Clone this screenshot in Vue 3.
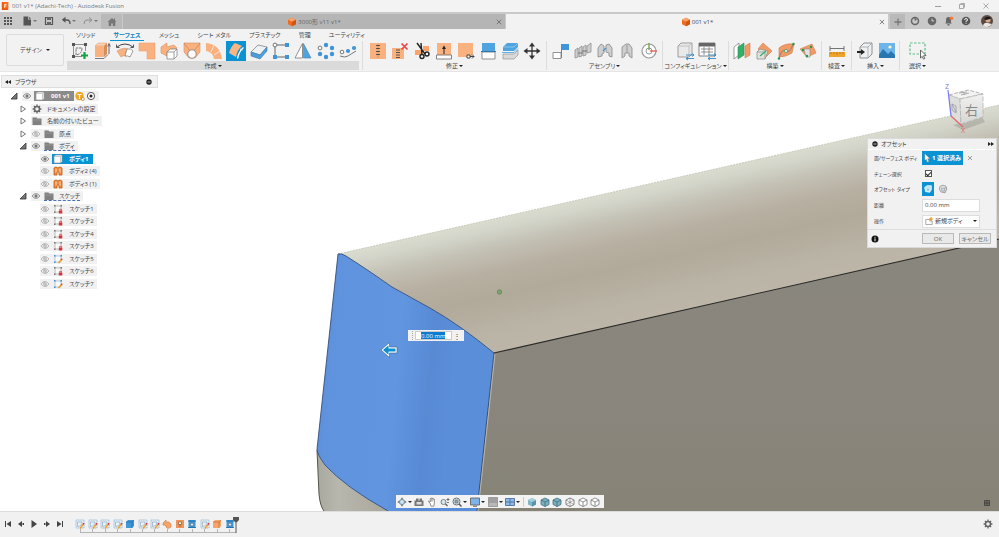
<template>
  <div class="app">
    <svg class="sprite" aria-hidden="true">
      <defs>
        <!-- create -->
        <symbol id="r-sketch" viewBox="0 0 20 20">
          <path d="M4 3.500h10M3.500 4v11M4 15.500h8M15.500 4v6" stroke="#777" stroke-width=".8" fill="none" />
          <path d="M6 14V7h6q0 6-6 7z" stroke="#555" stroke-width=".8" fill="none" stroke-dasharray="2.500 .8" />
          <path d="M2 2h3v3H2zM14 2h3v3h-3zM2 14h3v3H2z" fill="#555" />
          <path d="M14.500 11v7M11 14.500h7" stroke="#16a245" stroke-width="2.200" />
        </symbol>
        <symbol id="r-extrude" viewBox="0 0 20 20">
          <path d="M3 5l3-3h9l-3 3z" fill="#fcd1b0" stroke="#d59a6e" stroke-width=".5" />
          <path d="M3 5h9v11H3z" fill="#f9b17f" />
          <path d="M12 5l3-3v11l-3 3z" fill="#d88d5a" />
          <path d="M3 17.500h9l4-4" stroke="#777" stroke-width="1" fill="none" />
          <path d="M17 13V4M15.700 5.500L17 2.500l1.300 3" stroke="#555" stroke-width=".9" fill="none" />
        </symbol>
        <symbol id="r-revolve" viewBox="0 0 20 20">
          <path d="M2 10q8-5 12-1l-3 6q-3-1-5 1z" fill="#f9b17f" stroke="#d3925f" stroke-width=".6" />
          <path d="M12 8q4-1 6 2l-3 6q-2-1.500-5-1z" fill="#fff" stroke="#777" stroke-width=".7" />
          <path d="M2 6q8-6 16 0" stroke="#444" fill="none" />
          <path d="M1.500 3.500v3h3M18.500 3.500v3h-3" stroke="#444" fill="none" stroke-width=".9" />
        </symbol>
        <symbol id="r-sweep" viewBox="0 0 20 20">
          <path d="M2 2h16v16h-8v-8H2z" fill="#f9b17f" stroke="#e7a171" stroke-width=".6" />
        </symbol>
        <symbol id="r-loft" viewBox="0 0 20 20">
          <path d="M2 6l6-4v4l7-2 3 3-4 3-6 1v4l-6-3z" fill="#f9b17f" stroke="#d3925f" stroke-width=".6" />
          <path d="M8 11h7v7H8zM8 11l3-3h7v7l-3 3M15 11l3-3" fill="#fff" stroke="#777" stroke-width=".7" />
        </symbol>
        <symbol id="r-patch" viewBox="0 0 20 20">
          <path d="M2 2h16v9l-5 6H7l-5-6z" fill="#f9b17f" stroke="#d3925f" stroke-width=".6" />
          <path d="M2 2l6 8M18 2l-6 8" fill="none" stroke="#c98455" stroke-width=".7" />
          <circle cx="10" cy="13" r="4.200" fill="#fff" stroke="#777" stroke-width=".8" />
        </symbol>
        <symbol id="r-ruled" viewBox="0 0 20 20">
          <path d="M2 2q14 1 16 16h-8q-1-7-8-8z" fill="#f9b17f" />
          <path d="M10 4L7 11M16 10l-6 4" stroke="#fff" stroke-width=".6" />
        </symbol>
        <symbol id="r-offset" viewBox="0 0 20 20">
          <path d="M3 12Q5 5 9 2l7 3q-5 4-6 11z" fill="#f9b584" />
          <path d="M11.500 17.500Q13 10 17.500 6.500" stroke="#fff" stroke-width="1.300" fill="none" />
          <path d="M14 8l2.500 1" stroke="#fff" stroke-width=".8" />
        </symbol>
        <symbol id="r-thicken" viewBox="0 0 20 20">
          <path d="M2 11l7-7 9 2-7 8z" fill="#eef1f4" stroke="#777" stroke-width=".7" />
          <path d="M2 11l9 3 7-8v4l-7 8-9-3z" fill="#4c9dda" stroke="#3b7fb4" stroke-width=".6" />
        </symbol>
        <symbol id="r-rect" viewBox="0 0 20 20">
          <path d="M6 4h8M4 6v8M6 16h8" stroke="#666" fill="none" />
          <circle cx="4" cy="4" r="1.900" fill="#fff" stroke="#555" stroke-width=".8" />
          <path d="M14 2h4v4h-4zM2 14h4v4H2zM14 14h4v4h-4z" fill="#3f93d6" />
        </symbol>
        <symbol id="r-mirror" viewBox="0 0 20 20">
          <path d="M9.500 2.500v14.500H2z" fill="#fff" stroke="#777" stroke-width=".8" />
          <path d="M10.500 2.500v14.500H18z" fill="#4fa3df" stroke="#3a83b8" stroke-width=".6" />
        </symbol>
        <symbol id="r-pattern" viewBox="0 0 20 20">
          <g fill="#3f93d6">
            <circle cx="10" cy="4" r="2.200" /><circle cx="16" cy="7" r="2.200" /><circle cx="16" cy="13" r="2.200" />
            <circle cx="10" cy="16" r="2.200" /><circle cx="4" cy="13" r="2.200" />
          </g>
          <circle cx="4" cy="7" r="1.900" fill="#fff" stroke="#555" stroke-width=".8" />
        </symbol>
        <symbol id="r-path" viewBox="0 0 20 20">
          <path d="M2 15q5 2 8 0t8-5" stroke="#777" fill="none" />
          <circle cx="4" cy="11" r="1.800" fill="#fff" stroke="#555" stroke-width=".8" />
          <circle cx="10" cy="10" r="2.100" fill="#3f93d6" /><circle cx="16" cy="7" r="2.100" fill="#3f93d6" />
        </symbol>
        <!-- modify -->
        <symbol id="r-stitch" viewBox="0 0 20 20">
          <path d="M2 2h16v16H2z" fill="#f9b17f" />
          <path d="M10 3v14" stroke="#d18e5c" stroke-width=".8" />
          <path d="M8 4.500h4M8 7.500h4M8 10.500h4M8 13.500h4" stroke="#444" stroke-width=".9" />
        </symbol>
        <symbol id="r-unstitch" viewBox="0 0 20 20">
          <path d="M2 7h12v11H2z" fill="#f9b17f" />
          <path d="M6 9h4M6 11.500h4M6 14h4M6 16.500h4" stroke="#444" stroke-width=".9" />
          <path d="M11.500 2.500l6 6M17.500 2.500l-6 6" stroke="#f04444" stroke-width="1.700" />
        </symbol>
        <symbol id="r-trim" viewBox="0 0 20 20">
          <path d="M11 5h6v5h-6zM3 9h6v5H3z" fill="#f9a56a" />
          <path d="M5 2l8 11M9 2l1 12" stroke="#222" stroke-width="1.400" />
          <circle cx="10" cy="15.500" r="2" fill="none" stroke="#222" stroke-width="1.400" />
          <circle cx="15" cy="13" r="2" fill="none" stroke="#222" stroke-width="1.400" />
        </symbol>
        <symbol id="r-extend" viewBox="0 0 20 20">
          <path d="M3 2h14v12H3z" fill="#f9b17f" />
          <path d="M2.500 14h15v4h-15z" fill="#fff" stroke="#666" stroke-width=".8" />
          <path d="M10 13V6.500" stroke="#222" /><path d="M10 4.500l2 3.500H8z" fill="#222" />
        </symbol>
        <symbol id="r-replace" viewBox="0 0 20 20">
          <path d="M2 2h15v14H2z" fill="#f9b17f" />
          <path d="M11 14h3v3h-3zM14 15.500h4M16 13.500l2 2-2 2" stroke="#333" fill="#fff" stroke-width=".9" />
        </symbol>
        <symbol id="r-split" viewBox="0 0 20 20">
          <path d="M4 2h13v8H4z" fill="#4fa3df" />
          <path d="M4 11h13v7H4z" fill="#fff" stroke="#777" stroke-width=".8" />
          <path d="M3 10.500h15" stroke="#2f77ad" />
        </symbol>
        <symbol id="r-splitbody" viewBox="0 0 20 20">
          <path d="M3 6l4-4h11v4l-4 4H3z" fill="#4fa3df" />
          <path d="M3 6h11l4-4" stroke="#9acbf0" stroke-width=".8" fill="none" />
          <path d="M2 11.500h12l4-4" stroke="#5fb2ea" fill="none" />
          <path d="M3 13h11l4-4v5l-4 4H3z" fill="#d9d9d9" stroke="#888" stroke-width=".6" />
        </symbol>
        <symbol id="r-move" viewBox="0 0 20 20">
          <path d="M10 3v14M3 10h14" stroke="#333" stroke-width="1.300" />
          <path d="M10 1.500l3 4H7zM10 18.500l3-4H7zM1.500 10l4-3v6zM18.500 10l-4-3v6z" fill="#333" />
        </symbol>
        <!-- assemble -->
        <symbol id="r-component" viewBox="0 0 20 20">
          <path d="M2 11.500h8v6H2z" fill="#fff" stroke="#777" stroke-width=".8" />
          <path d="M11 3h7v6h-7z" fill="#3f97d9" />
          <path d="M10.500 3v14" stroke="#e4574f" />
        </symbol>
        <symbol id="r-joint" viewBox="0 0 20 20">
          <path d="M2 17V9l3-2v9zM6 16V7l3-2v10zM10 15V6l3-2v10zM14 12V5l4-3v9z" fill="#cfcfcf" stroke="#888" stroke-width=".7" />
          <path d="M5 12h5M9 10h5" stroke="#777" />
        </symbol>
        <symbol id="r-asbuilt" viewBox="0 0 20 20">
          <path d="M3 16V7l3-4 3 2v7l-2 1v2zM11 11V4l3-1 3 4v9l-3-1v-3z" fill="#cfcfcf" stroke="#888" stroke-width=".8" />
          <path d="M8 10l3-3" stroke="#3f93d6" stroke-width="1.300" />
        </symbol>
        <symbol id="r-rigid" viewBox="0 0 20 20">
          <path d="M5 17V6l4-3h3l3 4v10l-3-2v-3H8v3z" fill="#cfcfcf" stroke="#888" stroke-width=".8" />
          <path d="M10 4v8" stroke="#999" />
        </symbol>
        <symbol id="r-drive" viewBox="0 0 20 20">
          <circle cx="10" cy="10" r="7" fill="#fff" stroke="#999" stroke-width="1.200" />
          <circle cx="10" cy="10" r="3" fill="none" stroke="#999" />
          <path d="M10 9V2" stroke="#63a83f" stroke-width="1.300" />
          <path d="M11 10h7" stroke="#e4574f" stroke-width="1.300" />
        </symbol>
        <!-- configure -->
        <symbol id="r-config" viewBox="0 0 20 20">
          <path d="M3 5l3-3h11v11l-3 3H3z" fill="#e9e9e9" stroke="#888" stroke-width=".8" />
          <path d="M3 5h11v11M14 5l3-3" fill="none" stroke="#aaa" stroke-width=".6" />
          <path d="M11 14h8M17 12.500l2 1.500-2 1.500M19 17.500h-8M13 16l-2 1.500 2 1.500" stroke="#2f86c1" fill="none" stroke-width=".9" />
        </symbol>
        <symbol id="r-table" viewBox="0 0 20 20">
          <path d="M2 2h16v13H2z" fill="#fff" stroke="#666" stroke-width=".8" />
          <path d="M2 2h16v3.500H2z" fill="#666" />
          <path d="M4 8h12M4 11h12M7 6v8M12 6v8" stroke="#777" stroke-width=".8" />
          <path d="M11 14h8M17 12.500l2 1.500-2 1.500M19 17.500h-8M13 16l-2 1.500 2 1.500" stroke="#2f86c1" fill="none" stroke-width=".9" />
        </symbol>
        <!-- construct -->
        <symbol id="r-plane" viewBox="0 0 20 20">
          <path d="M2 6l5-4v12l-5 4z" fill="#fff" stroke="#777" stroke-width=".7" />
          <path d="M6 6l6-4v12l-6 4z" fill="#35b06a" stroke="#2a8f55" stroke-width=".6" />
          <path d="M13 5l5-3v12l-5 3z" fill="#f39a66" stroke="#c97a4a" stroke-width=".6" />
        </symbol>
        <symbol id="r-axis" viewBox="0 0 20 20">
          <path d="M9 2l9 8-6 6-8-8z" fill="#f39a66" stroke="#c97a4a" stroke-width=".6" />
          <path d="M3 11h8v7H3zM3 11l3-3 8 2-3 8" fill="#dfe3dd" stroke="#888" stroke-width=".7" />
          <path d="M6 15l6-5" stroke="#35b06a" stroke-width="1.300" />
        </symbol>
        <symbol id="r-tangent" viewBox="0 0 20 20">
          <path d="M3 7q6-5 15-4l-2 9q-6 4-13 4z" fill="#f39a66" stroke="#c97a4a" stroke-width=".6" />
          <path d="M3 17q3-10 7-7t7-7" stroke="#777" fill="none" stroke-width=".8" />
          <circle cx="3" cy="17.500" r="1.200" fill="#1a9b4c" /><circle cx="17.500" cy="3" r="1.200" fill="#1a9b4c" /><circle cx="10" cy="10" r="1.600" fill="#eee" stroke="#1a9b4c" stroke-width=".6" />
        </symbol>
        <symbol id="r-point" viewBox="0 0 20 20">
          <path d="M2 8l12-5 4 9-9 4z" fill="#f39a66" stroke="#c97a4a" stroke-width=".6" />
          <path d="M6 8h6v8H8z" fill="#e4e4e4" stroke="#888" stroke-width=".6" />
          <circle cx="5" cy="9" r="1.200" fill="#1a9b4c" /><circle cx="13" cy="6" r="1.200" fill="#1a9b4c" /><circle cx="9" cy="15" r="1.200" fill="#1a9b4c" />
        </symbol>
        <!-- inspect, insert, select -->
        <symbol id="r-measure" viewBox="0 0 20 20">
          <path d="M3 5v5M17 5v5M3 7.500h14" stroke="#666" stroke-width=".9" />
          <path d="M2 11h16v5H2z" fill="#f0a32a" />
          <path d="M4 11v2M7 11v2M10 11v3M13 11v2M16 11v2" stroke="#a86a10" stroke-width=".7" />
        </symbol>
        <symbol id="r-insert" viewBox="0 0 20 20">
          <path d="M5 6l4-4h8v11l-4 4H5z" fill="#eef1f4" stroke="#777" stroke-width=".8" />
          <path d="M5 6h8v11M13 6l4-4" fill="none" stroke="#999" stroke-width=".7" />
          <path d="M2 11h5" stroke="#222" stroke-width="2" />
          <path d="M6 8l4 3-4 3z" fill="#222" />
        </symbol>
        <symbol id="r-image" viewBox="0 0 20 20">
          <path d="M2 2h16v15H2z" fill="#6cb4ea" />
          <path d="M2 14l4-6 5 5 3-3 4 4v3H2z" fill="#2a76b0" />
          <circle cx="13" cy="6" r="1.600" fill="#fff6c8" />
        </symbol>
        <symbol id="r-select" viewBox="0 0 20 20">
          <path d="M2 2h15v11H2z" fill="none" stroke="#5cc088" stroke-width="1.200" stroke-dasharray="2.500 1.500" />
          <path d="M12.500 9l5.500 5.500-2.500.3 1.300 2.700-1.300.6-1.300-2.700-1.700 1.600z" fill="#fff" stroke="#444" stroke-width=".8" />
        </symbol>

        <!-- browser tree -->
        <symbol id="t-eye" viewBox="0 0 10 10">
          <path d="M1 5q4-5 8 0q-4 5-8 0z" fill="#ddd" stroke="#888" stroke-width=".8" /><circle cx="5" cy="5" r="1.500" fill="#777" />
        </symbol>
        <symbol id="t-eye-off" viewBox="0 0 10 10">
          <path d="M1 5q4-5 8 0q-4 5-8 0z" fill="none" stroke="#aaa" stroke-width=".8" /><circle cx="5" cy="5" r="1.400" fill="none" stroke="#aaa" stroke-width=".8" /><path d="M3.500 2.500l3 5" stroke="#aaa" stroke-width=".8" />
        </symbol>
        <symbol id="t-folder" viewBox="0 0 10 10">
          <path d="M.5 1.500h4l.8 1h4.200v6.500h-9z" fill="#808080" /><path d="M.5 4h9" stroke="#a3a3a3" stroke-width=".6" />
        </symbol>
        <symbol id="t-gear" viewBox="0 0 10 10">
          <circle cx="5" cy="5" r="2.500" fill="none" stroke="#666" stroke-width="1.500" />
          <path d="M5 .6v2M5 7.400v2M.6 5h2M7.400 5h2M1.900 1.900l1.400 1.400M6.700 6.700l1.400 1.400M8.100 1.900L6.700 3.300M3.300 6.700L1.900 8.100" stroke="#666" stroke-width="1.300" />
        </symbol>
        <symbol id="t-cube" viewBox="0 0 10 10">
          <path d="M1 2.500l1.500-1.500h6.500v6.500L7.500 9H1z" fill="#fff" stroke="#999" stroke-width=".7" /><path d="M1 2.500h6.500V9M7.500 2.500L9 1" fill="none" stroke="#aaa" stroke-width=".6" />
        </symbol>
        <symbol id="t-surface" viewBox="0 0 10 10">
          <path d="M1 2q2-2 4 0q2-2 4 0v7H6V6H4v3H1z" fill="#f08a3c" stroke="#c25d14" stroke-width=".8" /><path d="M3 2.500v4M7 2.500v4" stroke="#fff" stroke-width=".7" />
        </symbol>
        <symbol id="t-locked" viewBox="0 0 10 10">
          <path d="M2 2h6v6H2z" fill="#fafafa" stroke="#999" stroke-width=".6" />
          <path d="M1 1h1.500v1.500H1zM7.500 1H9v1.500H7.500zM1 7.500h1.500V9H1z" fill="#777" />
          <path d="M5.800 6.500h3.500v3H5.800z" fill="#d8323c" /><path d="M6.600 6.500V5.300h1.900v1.200" fill="none" stroke="#d8323c" stroke-width=".7" />
        </symbol>
        <symbol id="t-pencil" viewBox="0 0 10 10">
          <path d="M2 2h6v6H2z" fill="#fafafa" stroke="#8ba7bd" stroke-width=".6" />
          <path d="M1 1h1.500v1.500H1zM7.500 1H9v1.500H7.500zM1 7.500h1.500V9H1z" fill="#3b8fcd" />
          <path d="M5.500 9l3-3.500" stroke="#f0a02c" stroke-width="1.600" /><path d="M8.300 5.700l.8-.9" stroke="#d8323c" stroke-width="1.600" />
        </symbol>
        <symbol id="t-sketch" viewBox="0 0 10 10">
          <path d="M1 1h8v8H1z" fill="#eaf2f9" stroke="#7aa9cf" stroke-width=".7" stroke-dasharray="1.500 .6" />
          <path d="M2.500 7.500V3H7q0 4-4.500 4.500z" fill="none" stroke="#8fa9bd" stroke-width=".7" />
          <path d="M5 9.500l3-4" stroke="#f0a02c" stroke-width="1.600" /><path d="M8 5.500l1-1.300" stroke="#d8323c" stroke-width="1.600" />
        </symbol>
        <symbol id="t-extrude" viewBox="0 0 10 10">
          <path d="M1 3l2-2h6v6L7 9H1z" fill="#3f97d9" /><path d="M1 3h6v6M7 3l2-2" fill="none" stroke="#1f6ca8" stroke-width=".7" />
        </symbol>
        <symbol id="t-extrude-o" viewBox="0 0 10 10">
          <path d="M1 3l2-2h6v6L7 9H1z" fill="#f9a56a" /><path d="M1 3h6v6M7 3l2-2" fill="none" stroke="#b96f3c" stroke-width=".7" />
        </symbol>
        <symbol id="t-loft" viewBox="0 0 10 10">
          <path d="M1 4l3-3v2h3l2 2v3L6 9.500 4 8V6.500L1 6z" fill="#f9a56a" stroke="#cf7b43" stroke-width=".6" />
        </symbol>
        <symbol id="t-stitch" viewBox="0 0 10 10">
          <path d="M1 1h8v8H1z" fill="#f0935a" /><path d="M3.500 3h3v2.500h-3zM5 5v3" fill="#fff" stroke="#7a4a2c" stroke-width=".6" />
        </symbol>
        <symbol id="t-thick" viewBox="0 0 10 10">
          <path d="M1.500 1h7v8h-7z" fill="#3f97d9" /><path d="M1 2h8M1 8.500h8" stroke="#1f6ca8" stroke-width=".8" /><circle cx="5" cy="5.500" r="1.500" fill="#e9f4fc" stroke="#555" stroke-width=".6" />
        </symbol>

        <!-- navigation bar -->
        <symbol id="n-orbit" viewBox="0 0 10 10">
          <path d="M5 .3l1.700 2.500h-3.400zM5 9.700l1.700-2.500h-3.400zM.3 5l2.500-1.700v3.400zM9.700 5L7.200 3.300v3.400z" fill="#777" /><circle cx="5" cy="5" r="2.500" fill="#cfe3f1" stroke="#5b7f99" stroke-width=".7" />
        </symbol>
        <symbol id="n-look" viewBox="0 0 10 10">
          <path d="M.5 3.500h9V9h-9zM2 1.500h2.500v2H2zM5.500 1.500H8v2H5.500z" fill="#777" /><path d="M2.500 5h5v2.500h-5z" fill="#ddd" />
        </symbol>
        <symbol id="n-pan" viewBox="0 0 10 10">
          <path d="M3 6L1.300 4.500l.8-.7L3.300 5V1.500h1V1h1v.5h1.100v.7h1V6L6.800 9.200H4z" fill="#fff" stroke="#666" stroke-width=".7" /><path d="M4.500 2v2.500M5.700 2v2.500" stroke="#666" stroke-width=".5" />
        </symbol>
        <symbol id="n-zoom" viewBox="0 0 10 10">
          <circle cx="3.500" cy="5" r="2.500" fill="#d7e9f5" stroke="#666" stroke-width=".8" /><path d="M5.500 7l2 2" stroke="#555" stroke-width="1.300" /><path d="M6.500 2.500h3M8 1v3M7 5.500h2" stroke="#444" stroke-width=".7" />
        </symbol>
        <symbol id="n-fit" viewBox="0 0 10 10">
          <circle cx="4.500" cy="4.500" r="3.500" fill="#d7e9f5" stroke="#666" stroke-width=".9" /><path d="M3 3h3v3H3z" fill="#9aa" stroke="#666" stroke-width=".6" /><path d="M7 7l2.500 2.500" stroke="#555" stroke-width="1.400" />
        </symbol>
        <symbol id="n-display" viewBox="0 0 10 10">
          <path d="M.5 1h9v7h-9z" fill="#7fb2e8" stroke="#666" stroke-width=".9" /><path d="M3 9.200h4" stroke="#666" />
        </symbol>
        <symbol id="n-grid" viewBox="0 0 10 10">
          <path d="M.5.500h9v9h-9z" fill="#a0a0a0" stroke="#888" stroke-width=".7" /><path d="M1 6h8v3H1z" fill="#b8b8b8" />
        </symbol>
        <symbol id="n-views" viewBox="0 0 10 10">
          <path d="M.5 1.500h9v7h-9z" fill="#8ebbe8" stroke="#4f6f9c" stroke-width=".9" /><path d="M5 1.500v7M.5 5h9" stroke="#4f6f9c" stroke-width=".9" />
        </symbol>
        <symbol id="n-shaded" viewBox="0 0 10 10">
          <path d="M5 1l4 2v4.500L5 9.500l-4-2V3z" fill="#7fb5c4" /><path d="M5 5v4.500l4-2V3z" fill="#5a93a5" /><path d="M5 1l4 2-4 2-4-2z" fill="#a4d0da" />
        </symbol>
        <symbol id="n-edges" viewBox="0 0 10 10">
          <path d="M5 1l4 2v4.500L5 9.500l-4-2V3z" fill="#79afbf" stroke="#44707e" stroke-width=".8" /><path d="M1 3l4 2 4-2M5 5v4.500" fill="none" stroke="#44707e" stroke-width=".8" />
        </symbol>
        <symbol id="n-wire" viewBox="0 0 10 10">
          <path d="M5 1l4 2v4.500L5 9.500l-4-2V3z" fill="#fff" stroke="#666" stroke-width=".8" /><path d="M1 3l8 4.500M9 3L1 7.500M5 1v8.500" fill="none" stroke="#777" stroke-width=".6" />
        </symbol>
        <symbol id="n-hidden" viewBox="0 0 10 10">
          <path d="M5 1l4 2v4.500L5 9.500l-4-2V3z" fill="#fff" stroke="#777" stroke-width=".8" /><path d="M1 3l4 2 4-2M5 5v4.500" fill="none" stroke="#777" stroke-width=".8" />
        </symbol>

        <!-- header -->
        <symbol id="h-grid" viewBox="0 0 10 10">
          <path d="M1 1h2v2H1zM4 1h2v2H4zM7 1h2v2H7zM1 4h2v2H1zM4 4h2v2H4zM7 4h2v2H7zM1 7h2v2H1zM4 7h2v2H4zM7 7h2v2H7z" fill="#555" />
        </symbol>
        <symbol id="h-file" viewBox="0 0 10 10"><path d="M1.500.5h4.500v3h3v6H1.500zM6.800.5L9 2.800H6.800z" fill="#555" /></symbol>
        <symbol id="h-save" viewBox="0 0 10 10">
          <path d="M1.500 1.500h7v7h-7z" fill="none" stroke="#555" stroke-width="1.200" /><path d="M3 1h4v3H3zM3 6h4v3H3z" fill="#666" />
        </symbol>
        <symbol id="h-undo" viewBox="0 0 10 10">
          <path d="M2 4h4q3 0 3 4" fill="none" stroke="#555" stroke-width="1.300" /><path d="M4.500.8v6L.8 3.800z" fill="#555" />
        </symbol>
        <symbol id="h-redo" viewBox="0 0 10 10">
          <path d="M8 4H4Q1 4 1 8" fill="none" stroke="#888" stroke-width=".9" /><path d="M6 1.500l3 2.500-3 2.500" fill="none" stroke="#888" stroke-width=".9" />
        </symbol>
        <symbol id="h-home" viewBox="0 0 10 10"><path d="M5 1L.5 5h1.200v4h2.500V6.500h1.600V9h2.500V5h1.200L8 3.500V1.500H7v1.200z" fill="#777" /></symbol>
        <symbol id="h-cube" viewBox="0 0 10 10">
          <path d="M5 .8l4 2v4.400l-4 2-4-2V2.800z" fill="#ee6b1f" /><path d="M5 .8l4 2-4 2-4-2z" fill="#fba36c" /><path d="M5 4.800v4.400l4-2V2.800z" fill="#d4530f" />
        </symbol>
        <symbol id="h-sync" viewBox="0 0 10 10"><circle cx="5" cy="5" r="3.500" fill="none" stroke="#666" stroke-width="1.500" /><path d="M4 1.500l3 2-2 1.500" fill="#666" /></symbol>
        <symbol id="h-clock" viewBox="0 0 10 10"><circle cx="5" cy="5" r="4.300" fill="#666" /><path d="M5 2.500V5h2.200" stroke="#ddd" fill="none" stroke-width=".9" /></symbol>
        <symbol id="h-bell" viewBox="0 0 10 10"><path d="M1 7.500l1-1V4q0-3 2.500-3T7 4v2.500l1 1zM3.500 8h2v1.500h-2z" fill="#666" /><circle cx="7.500" cy="2.300" r="1.800" fill="#f5793a" /></symbol>
        <symbol id="h-help" viewBox="0 0 10 10">
          <circle cx="5" cy="5" r="4.300" fill="#555" /><path d="M3.600 4q0-1.500 1.500-1.500T6.500 4Q6.500 5 5 5.200V6M5 6.800v1" fill="none" stroke="#fff" stroke-width=".9" />
        </symbol>

        <linearGradient id="top-face" gradientUnits="userSpaceOnUse" x1="620" y1="190" x2="649" y2="318">
          <stop offset="0" stop-color="#dadcd0" />
          <stop offset=".08" stop-color="#d3d5ca" />
          <stop offset=".22" stop-color="#c3c0b4" />
          <stop offset=".4" stop-color="#b7afa1" />
          <stop offset=".58" stop-color="#b1a999" />
          <stop offset=".85" stop-color="#bab4a7" />
          <stop offset="1" stop-color="#bcb5a8" />
        </linearGradient>
        <linearGradient id="side-face" x1="0" y1="0" x2="0" y2="1">
          <stop offset="0" stop-color="#89867d" />
          <stop offset=".6" stop-color="#8a867e" />
          <stop offset="1" stop-color="#868376" />
        </linearGradient>
        <linearGradient id="blue-face" gradientUnits="userSpaceOnUse" x1="325" y1="0" x2="490" y2="16">
          <stop offset="0" stop-color="#5c8fd9" />
          <stop offset=".1" stop-color="#5788d2" />
          <stop offset=".25" stop-color="#6093dd" />
          <stop offset=".65" stop-color="#6195e0" />
          <stop offset=".85" stop-color="#588ad4" />
          <stop offset="1" stop-color="#5b8ed9" />
        </linearGradient>
        <linearGradient id="lower-face" x1="0" y1="0" x2="1" y2="0">
          <stop offset="0" stop-color="#a9a89e" />
          <stop offset=".3" stop-color="#b8b7ad" />
          <stop offset="1" stop-color="#aaa79c" />
        </linearGradient>
        <linearGradient id="cube-front" x1="0" y1="0" x2="0" y2="1">
          <stop offset="0" stop-color="#f1f1f1" />
          <stop offset="1" stop-color="#d6d6d4" />
        </linearGradient>
      </defs>
    </svg>

    <header class="titlebar">
      <svg class="titlebar__logo" viewBox="0 0 10 10">
        <path d="M1 0h8v10H1z" fill="#e8590c" /><path d="M3 0h6v8H3z" fill="#ff6b1a" /><path d="M4.500 7V3H7M4.500 5h2" stroke="#fff" fill="none" />
      </svg>
      <h1 class="titlebar__title">001 v1* (Adachi-Tech) - Autodesk Fusion</h1>
      <div class="titlebar__window">
        <button type="button" aria-label="最小化"><svg viewBox="0 0 6 6"><path d="M0 3.500h6" stroke="#888" stroke-width=".8" /></svg></button>
        <button type="button" aria-label="元に戻す"><svg viewBox="0 0 6 6"><path d="M.5 1.500h4v4h-4zM1.500.5h4v4" fill="none" stroke="#888" stroke-width=".7" /></svg></button>
        <button type="button" aria-label="閉じる"><svg viewBox="0 0 6 6"><path d="M.5.5l5 5M5.500.5l-5 5" stroke="#888" stroke-width=".7" /></svg></button>
      </div>
    </header>

    <nav class="docbar">
      <div class="docbar__tools">
        <button v-for="tool in quickTools" :key="tool.icon" type="button" :aria-label="tool.label">
          <svg class="icon10"><use :href="'#' + tool.icon" /></svg>
          <span v-if="tool.menu" class="caret caret--soft"></span>
        </button>
      </div>
      <button type="button" class="docbar__home" aria-label="ホーム"><svg class="icon10"><use href="#h-home" /></svg></button>
      <div v-for="doc in documents" :key="doc.name" class="doctab" :class="{ 'doctab--active': doc.active }">
        <svg class="icon10"><use href="#h-cube" /></svg>
        <span>{{ doc.name }}</span>
        <button type="button" class="doctab__close" aria-label="タブを閉じる">
          <svg viewBox="0 0 6 6"><path d="M.8.8l4.400 4.400M5.200.8L.8 5.200" stroke="#666" stroke-width=".8" /></svg>
        </button>
      </div>
      <button type="button" class="docbar__add" aria-label="新規"><svg class="icon10" viewBox="0 0 10 10"><path d="M5 1.500v7M1.500 5h7" stroke="#777" stroke-width="1.300" /></svg></button>
      <div class="docbar__status">
        <button v-for="item in statusTools" :key="item.icon" type="button" :aria-label="item.label">
          <svg class="icon10"><use :href="'#' + item.icon" /></svg>
        </button>
        <svg class="docbar__avatar" viewBox="0 0 12 12">
          <circle cx="6" cy="6" r="6" fill="#5b4a42" /><circle cx="7" cy="5" r="2.500" fill="#d8a98c" /><path d="M2 11q1-4 5-3t4 1q-2 3-5 3T2 11z" fill="#e9e6e4" /><path d="M3 4q3-4 7-1l-1 1-4 1z" fill="#1e1a19" />
        </svg>
      </div>
    </nav>

    <section class="ribbon">
      <button type="button" class="ribbon__workspace">デザイン <span class="caret"></span></button>
      <div class="ribbon__main">
        <div class="ribbon__tabs" role="tablist">
          <button
            v-for="tab in tabs"
            :key="tab"
            type="button"
            role="tab"
            class="ribbon__tab"
            :class="{ 'ribbon__tab--active': tab === activeTab }"
            :aria-selected="tab === activeTab"
            @click="activeTab = tab"
          >{{ tab }}</button>
        </div>
        <div class="ribbon__groups">
          <div
            v-for="group in groups"
            :key="group.label"
            class="group"
            :class="{ 'group--filled': group.filled }"
            :style="{ width: group.width + 'px' }"
          >
            <div class="group__icons">
              <button
                v-for="icon in group.icons"
                :key="icon"
                type="button"
                class="group__icon"
                :class="{ 'group__icon--active': icon === 'offset' }"
                :aria-label="icon"
              ><svg><use :href="'#r-' + icon" /></svg></button>
            </div>
            <button type="button" class="group__label">{{ group.label }}<span class="caret"></span></button>
          </div>
        </div>
      </div>
    </section>

    <main class="viewport">
      <svg class="viewport__scene" viewBox="0 72 999 439" preserveAspectRatio="xMidYMid slice">
        <path d="M338 254L999 105V240L494 353Q460 325 430 308L392 287Q365 268 346 256Q341 253 338 254z" fill="url(#top-face)" />
        <path d="M338 254L999 105" stroke="#b9bbab" stroke-width=".7" stroke-dasharray="2 1" />
        <path d="M494 353L999 239V511H476z" fill="url(#side-face)" />
        <path d="M494 353L999 239" stroke="#2b2a27" stroke-width="1.100" />
        <path d="M317 449Q317 454 325 465Q345 487 388 511H324Q320 506 319 495z" fill="url(#lower-face)" />
        <path d="M317 450L319 494Q320 506 324 511" fill="none" stroke="#55544e" stroke-width="1" />
        <path d="M338 254Q341 253 346 256Q365 268 392 287L430 308Q460 325 494 353L477 511H388Q345 487 325 465Q317 454 317 449z" fill="url(#blue-face)" />
        <path d="M477 511L494 353Q460 325 430 308L392 287Q365 268 346 256Q341 253 338 254L317 449Q317 454 325 465Q345 487 388 511" fill="none" stroke="#24406f" stroke-width=".8" />
        <path d="M478 511L495 354" stroke="#c9c3b4" stroke-width=".8" />
        <circle cx="499.500" cy="292" r="2.200" fill="#7ba56c" stroke="#5d7f55" stroke-width=".7" />
        <path d="M381 350l8.500-7.500v4.500h7.500v6h-7.500v4.500z" fill="#fff" stroke="#33648c" stroke-width=".6" />
        <path d="M383 350l5.500-4.800v3.300h7v3h-7v3.300z" fill="#0d8fd0" />
      </svg>

      <aside class="browser">
        <div class="browser__head">
          <svg class="browser__fold" viewBox="0 0 6 6"><path d="M3 1v4L0 3zM6 1v4L3 3z" fill="#222" /></svg>
          <span>ブラウザ</span>
          <svg class="dot" viewBox="0 0 6 6"><circle cx="3" cy="3" r="2.700" fill="#222" /><path d="M1.500 3h3" stroke="#ddd" stroke-width=".8" /></svg>
        </div>
        <ul class="tree">
          <li v-for="node in nodes" :key="node.name" class="node" :class="'node--level' + node.level">
            <span v-if="node.open !== undefined" class="node__arrow">
              <svg viewBox="0 0 8 8">
                <path v-if="node.open" d="M7 1v6H1z" fill="#777" stroke="#333" stroke-width=".8" />
                <path v-else d="M2 1l4.500 3L2 7z" fill="#fff" stroke="#555" stroke-width=".8" />
              </svg>
            </span>
            <span class="node__body" :class="{ 'node__body--selected': node.selected, 'node__body--root': node.level === 0 }">
              <svg v-if="node.eye" class="node__eye"><use :href="node.eye === 'on' ? '#t-eye' : '#t-eye-off'" /></svg>
              <span class="node__chip" :class="{ 'node__chip--dashed': node.dashed }">
                <svg class="node__icon"><use :href="'#t-' + node.icon" /></svg>
                <span>{{ node.name }}</span>
              </span>
              <template v-if="node.level === 0">
                <svg class="node__badge" viewBox="0 0 10 10"><circle cx="4.500" cy="5" r="4.200" fill="#f2a51f" /><path d="M2.500 3.500h4M4.500 3.500V8" stroke="#fff" stroke-width="1.200" /><circle cx="7.800" cy="8" r="1.500" fill="#fff" stroke="#a06a10" stroke-width=".6" /></svg>
                <svg class="node__badge" viewBox="0 0 10 10"><circle cx="5" cy="5" r="3.600" fill="#fff" stroke="#333" stroke-width=".8" /><circle cx="5" cy="5" r="1.500" fill="#222" /></svg>
              </template>
            </span>
          </li>
        </ul>
      </aside>

      <svg class="viewcube" viewBox="0 0 54 56">
        <path d="M16 46L26 51L48 43L45 38z" fill="#77756c" opacity=".3" />
        <path d="M12 16L31 11L46 15L46 38L24 45L14 37z" fill="#ecedee" />
        <path d="M12 16L31 11L46 15L23 20z" fill="#f3f3f3" stroke="#999" stroke-width=".7" stroke-dasharray="4 1.500" />
        <path d="M12 16L23 20L24 45L14 37z" fill="#dededd" stroke="#b5b5b5" stroke-width=".6" />
        <path d="M23 20L46 15V38L24 45z" fill="url(#cube-front)" stroke="#aaa" stroke-width=".7" stroke-dasharray="5 1.500" />
        <path d="M15 25l4 2v7l-4-3zM15 25l4 8M22 14l8-1M24 16l8-2M26 13l2 3" stroke="#9a9a9a" fill="none" stroke-width=".8" />
        <text x="28" y="36" class="viewcube__face">右</text>
        <path d="M14 37L11 11" stroke="#7a7af0" stroke-width="1.200" />
        <path d="M14 37L26 48" stroke="#e06a6a" stroke-width="1.200" />
        <text x="8" y="10" class="viewcube__z">Z</text>
        <text x="24" y="54" class="viewcube__x">X</text>
      </svg>

      <div class="hud">
        <span class="hud__grip"></span>
        <span class="hud__field"><input v-model="distance" class="hud__input" aria-label="距離" /></span>
        <button type="button" class="hud__more" aria-label="詳細">⋮</button>
      </div>

      <form class="dialog" @submit.prevent>
        <div class="dialog__head">
          <svg class="dot" viewBox="0 0 6 6"><circle cx="3" cy="3" r="2.700" fill="#222" /><path d="M1.500 3h3" stroke="#ddd" stroke-width=".8" /></svg>
          <span>オフセット</span>
          <svg class="dialog__fold" viewBox="0 0 6 6"><path d="M0 1v4l3-2zM3 1v4l3-2z" fill="#222" /></svg>
        </div>
        <div class="dialog__rows">
          <div class="row">
            <span class="row__label">面/サーフェス ボディ</span>
            <button type="button" class="pick">
              <svg viewBox="0 0 8 10"><path d="M2 1l4.500 4.500H4.500L5.500 8.500l-1 .5-1.200-3L2 7z" fill="#fff" stroke="#f7b48a" stroke-width=".5" /></svg>
              1 選択済み
            </button>
            <button type="button" class="row__clear" aria-label="選択を解除">
              <svg viewBox="0 0 6 6"><path d="M1 1l4 4M5 1L1 5" stroke="#777" stroke-width=".7" /></svg>
            </button>
          </div>
          <div class="row">
            <label class="row__label" for="chain">チェーン選択</label>
            <input id="chain" v-model="chain" type="checkbox" class="check" />
          </div>
          <div class="row">
            <span class="row__label">オフセット タイプ</span>
            <button type="button" class="kind kind--active" aria-label="シャープ">
              <svg viewBox="0 0 12 12"><path d="M2 4l3-2h5v5l-2 3-5-1z" fill="#b9dcf3" stroke="#fff" stroke-width=".9" /><path d="M4 5h4v3.500H4z" fill="#7dbfe8" stroke="#fff" stroke-width=".8" /></svg>
            </button>
            <button type="button" class="kind" aria-label="丸み付け">
              <svg viewBox="0 0 12 12"><path d="M1.500 6q0-4.500 4.500-4.500T10.500 6l-2 4.500-5-1z" fill="#e2e6e9" stroke="#888" stroke-width=".9" /><path d="M4 5h4v3.500H5zM8 5l2-1" fill="#cfe0ec" stroke="#888" stroke-width=".7" /></svg>
            </button>
          </div>
          <div class="row">
            <label class="row__label" for="distance">距離</label>
            <input id="distance" v-model="distance" class="field" />
          </div>
          <div class="row">
            <label class="row__label" for="operation">操作</label>
            <span class="field field--select">
              <svg viewBox="0 0 10 10"><path d="M1 3h5v2h3v4.500H1z" fill="#fff" stroke="#777" stroke-width=".8" /><path d="M7.500.3l.7 1.500 1.500.7-1.500.7-.7 1.500-.7-1.500-1.500-.7 1.500-.7z" fill="#f39a1e" stroke="#f39a1e" /></svg>
              <select id="operation"><option>新規ボディ</option></select>
              <span class="caret"></span>
            </span>
          </div>
        </div>
        <div class="dialog__foot">
          <svg class="dialog__info" viewBox="0 0 8 8"><circle cx="4" cy="4" r="3.500" fill="#111" /><path d="M4 1.800v1M4 3.400v2.800" stroke="#fff" /></svg>
          <button type="submit" class="btn">OK</button>
          <button type="button" class="btn">キャンセル</button>
        </div>
      </form>

      <div class="navbar">
        <button
          v-for="item in navTools"
          :key="item.label"
          type="button"
          class="navbar__btn"
          :class="{ 'navbar__btn--first': item.first }"
          :aria-label="item.label"
        >
          <svg class="icon10"><use :href="'#n-' + item.icon" /></svg>
          <span v-if="item.menu" class="caret"></span>
        </button>
      </div>
      <svg class="viewport__corner" viewBox="0 0 6 6"><path d="M.5.5h5v5h-5zM.5 2.200h5M.5 3.800h5M3 .5v5" fill="none" stroke="#333" stroke-width=".7" /></svg>
    </main>

    <footer class="timeline">
      <div class="timeline__play">
        <button v-for="(shape, label) in playback" :key="label" type="button" :aria-label="label">
          <svg viewBox="0 0 8 8"><path :d="shape" fill="#444" /></svg>
        </button>
      </div>
      <div class="timeline__track">
        <span v-for="(feature, i) in features" :key="i" class="feature">
          <svg class="icon10"><use :href="'#t-' + feature" /></svg>
        </span>
        <svg class="timeline__marker" viewBox="0 0 8 18"><path d="M1 1h6v3L4.500 6.500V17h-1V6.500L1 4z" fill="#555" /></svg>
      </div>
      <button type="button" class="timeline__settings" aria-label="設定"><svg class="icon10"><use href="#t-gear" /></svg></button>
    </footer>
  </div>
</template>

<script setup>
import { ref } from 'vue'

const activeTab = ref('サーフェス')
const distance = ref('0.00 mm')
const chain = ref(true)

const tabs = ['ソリッド', 'サーフェス', 'メッシュ', 'シート メタル', 'プラスチック', '管理', 'ユーティリティ']

const quickTools = [
  { icon: 'h-grid', label: 'データ パネル' },
  { icon: 'h-file', label: 'ファイル', menu: true },
  { icon: 'h-save', label: '保存' },
  { icon: 'h-undo', label: '元に戻す', menu: true },
  { icon: 'h-redo', label: 'やり直し', menu: true }
]

const statusTools = [
  { icon: 'h-sync', label: '拡張機能' },
  { icon: 'h-clock', label: 'ジョブ' },
  { icon: 'h-bell', label: '通知' },
  { icon: 'h-help', label: 'ヘルプ' }
]

const documents = [
  { name: '3000形 v11 v1*', active: false },
  { name: '001 v1*', active: true }
]

const groups = [
  {
    label: '作成',
    width: 292,
    filled: true,
    icons: ['sketch', 'extrude', 'revolve', 'sweep', 'loft', 'patch', 'ruled', 'offset', 'thicken', 'rect', 'mirror', 'pattern', 'path']
  },
  { label: '修正', width: 184, icons: ['stitch', 'unstitch', 'trim', 'extend', 'replace', 'split', 'splitbody', 'move'] },
  { label: 'アセンブリ', width: 116, icons: ['component', 'joint', 'asbuilt', 'rigid', 'drive'] },
  { label: 'コンフィギュレーション', width: 66, icons: ['config', 'table'] },
  { label: '構築', width: 93, icons: ['plane', 'axis', 'tangent', 'point'] },
  { label: '検査', width: 30, icons: ['measure'] },
  { label: '挿入', width: 48, icons: ['insert', 'image'] },
  { label: '選択', width: 36, icons: ['select'] }
]

const nodes = [
  { name: '001 v1', level: 0, open: true, eye: 'on', icon: 'cube' },
  { name: 'ドキュメントの設定', level: 1, open: false, icon: 'gear' },
  { name: '名前の付いたビュー', level: 1, open: false, icon: 'folder' },
  { name: '原点', level: 1, open: false, eye: 'off', icon: 'folder' },
  { name: 'ボディ', level: 1, open: true, eye: 'on', icon: 'folder', dashed: true },
  { name: 'ボディ1', level: 2, eye: 'on', icon: 'cube', selected: true },
  { name: 'ボディ2 (4)', level: 2, eye: 'off', icon: 'surface' },
  { name: 'ボディ3 (1)', level: 2, eye: 'off', icon: 'surface' },
  { name: 'スケッチ', level: 1, open: true, eye: 'on', icon: 'folder', dashed: true },
  { name: 'スケッチ1', level: 2, eye: 'off', icon: 'locked' },
  { name: 'スケッチ2', level: 2, eye: 'off', icon: 'locked' },
  { name: 'スケッチ4', level: 2, eye: 'off', icon: 'locked' },
  { name: 'スケッチ3', level: 2, eye: 'off', icon: 'locked' },
  { name: 'スケッチ5', level: 2, eye: 'off', icon: 'pencil' },
  { name: 'スケッチ6', level: 2, eye: 'off', icon: 'locked' },
  { name: 'スケッチ7', level: 2, eye: 'off', icon: 'pencil' }
]

const navTools = [
  { icon: 'orbit', label: 'オービット', menu: true },
  { icon: 'look', label: 'ビュー正面' },
  { icon: 'pan', label: '画面移動' },
  { icon: 'zoom', label: 'ズーム' },
  { icon: 'fit', label: 'フィット', menu: true },
  { icon: 'display', label: '表示設定', menu: true },
  { icon: 'grid', label: 'グリッドとスナップ', menu: true },
  { icon: 'views', label: 'ビューポート', menu: true },
  { icon: 'shaded', label: 'シェーディング', first: true },
  { icon: 'edges', label: 'シェーディング、隠れたエッジ' },
  { icon: 'edges', label: 'シェーディング、表示エッジ' },
  { icon: 'wire', label: 'ワイヤフレーム' },
  { icon: 'hidden', label: 'ワイヤフレーム、隠れたエッジ' },
  { icon: 'hidden', label: 'ワイヤフレーム、表示エッジ' }
]

const playback = {
  最初へ: 'M1 1h1v6H1zM7 1v6L2.500 4z',
  前へ: 'M5 1v6L1 4zM5.500 3H7v2H5.500z',
  再生: 'M1.500 0L7 4 1.500 8z',
  次へ: 'M3 1v6l4-3zM1 3h1.500v2H1z',
  最後へ: 'M6 1h1v6H6zM1 1v6l4.500-3z'
}

const features = [
  'sketch', 'sketch', 'sketch', 'sketch', 'extrude', 'sketch', 'sketch',
  'loft', 'stitch', 'thick', 'sketch', 'extrude-o', 'thick'
]
</script>

<style>
body {
  margin: 0;
}
</style>

<style scoped>
.app {
  display: flex;
  flex-direction: column;
  min-height: 100vh;
  background: #fff;
  color: #444;
  font-family: 'Open Sans', 'Noto Sans CJK JP', sans-serif;
  font-feature-settings: 'palt';
  font-size: 6px;
  line-height: 8px;
}

.app * {
  box-sizing: border-box;
}

button,
input,
select {
  margin: 0;
  padding: 0;
  border: 0;
  background: none;
  color: inherit;
  font: inherit;
  font-feature-settings: inherit;
}

svg {
  display: block;
  flex: none;
}

.sprite {
  position: absolute;
  width: 0;
  height: 0;
}

.icon10 {
  width: 10px;
  height: 10px;
}

.caret {
  flex: none;
  width: 0;
  height: 0;
  border: 2px solid transparent;
  border-top: 2px solid #222;
  border-bottom: 0;
}

.caret--soft {
  border-top-color: #777;
}

.dot {
  width: 6px;
  height: 6px;
}

/* title bar */
.titlebar {
  display: flex;
  align-items: center;
  gap: 3px;
  height: 12px;
  padding: 0 2px 0 1px;
  background: #f3f3f3;
}

.titlebar__logo {
  width: 8px;
  height: 10px;
}

.titlebar__title {
  margin: 0;
  color: #777;
  font-size: 6px;
  font-weight: 400;
}

.titlebar__window {
  display: flex;
  gap: 18px;
  margin-left: auto;
  padding-right: 8px;
}

.titlebar__window svg {
  width: 6px;
  height: 6px;
}

/* document tabs */
.docbar {
  display: flex;
  height: 17px;
  padding-top: 1px;
  background: #c9c9c9;
}

.docbar__tools {
  display: flex;
  align-items: center;
  gap: 9px;
  width: 101px;
  padding-left: 3px;
}

.docbar__tools button {
  display: flex;
  align-items: center;
  gap: 1px;
}

.docbar__tools button:nth-child(n + 2) {
  margin-right: -2px;
}

.docbar__home {
  display: grid;
  place-items: center;
  width: 21px;
  margin: 1px 1px 0 0;
  background: #b9b9b9;
}

.doctab {
  position: relative;
  display: flex;
  flex: 1;
  align-items: center;
  justify-content: center;
  gap: 1px;
  margin: 1px 1px 0 0;
  background: #b5b5b5;
  color: #666;
}

.doctab--active {
  background: #f2f2f2;
  color: #444;
}

.doctab__close {
  position: absolute;
  right: 3px;
  top: 5px;
}

.doctab__close svg {
  width: 6px;
  height: 6px;
}

.docbar__add {
  display: grid;
  place-items: center;
  width: 15px;
  margin: 1px 0 0 1px;
  background: #b9b9b9;
}

.docbar__status {
  display: flex;
  align-items: center;
  gap: 7px;
  padding: 0 6px 0 5px;
}

.docbar__avatar {
  width: 12px;
  height: 12px;
  margin-left: 3px;
}

/* ribbon */
.ribbon {
  display: flex;
  height: 43px;
  background: #f2f2f2;
  border-bottom: 1px solid #e6e6e6;
}

.ribbon__workspace {
  display: flex;
  align-items: center;
  justify-content: center;
  gap: 4px;
  width: 58px;
  height: 32px;
  margin: 5px 3px 0 6px;
  border: 1px solid #dcdcdc;
  border-radius: 2px;
}

.ribbon__main {
  flex: 1;
  min-width: 0;
}

.ribbon__tabs {
  display: flex;
  gap: 12px;
  height: 12px;
  padding-left: 6px;
}

.ribbon__tab {
  padding: 0 3px;
  border-bottom: 1px solid transparent;
  white-space: nowrap;
}

.ribbon__tab--active {
  border-bottom-color: #0a93d3;
  color: #0a86c4;
  font-weight: 700;
}

.ribbon__groups {
  display: flex;
}

.group {
  flex: none;
  border-left: 1px solid #dcdcdc;
}

.group--filled {
  margin-right: 3px;
  border-left: 0;
}

.group__icons {
  display: flex;
  justify-content: center;
  gap: 2px;
}

.group--filled .group__icons {
  justify-content: space-between;
  gap: 0;
  padding: 0 1px 0 3px;
}

.group__icon svg {
  width: 20px;
  height: 20px;
}

.group__icon--active {
  background: #0a93d3;
}

.group__label {
  display: flex;
  align-items: center;
  justify-content: center;
  gap: 1px;
  width: 100%;
  height: 9px;
  white-space: nowrap;
}

.group--filled .group__label {
  background: #dadada;
}

/* viewport */
.viewport {
  position: relative;
  flex: 1;
  min-height: 240px;
  overflow: hidden;
}

.viewport__scene {
  position: absolute;
  inset: 0;
  width: 100%;
  height: 100%;
}

.viewport__corner {
  position: absolute;
  right: 9px;
  bottom: 5px;
  width: 6px;
  height: 6px;
}

.browser {
  position: relative;
  width: 158px;
  padding-top: 3px;
}

.browser__head {
  display: flex;
  align-items: center;
  gap: 4px;
  height: 13px;
  margin-left: 1px;
  padding: 0 5px 0 3px;
  border: 1px solid #dedede;
  background: #f1f1f1;
}

.browser__head .dot {
  margin-left: auto;
}

.browser__fold,
.dialog__fold {
  width: 6px;
  height: 6px;
}

.tree {
  display: grid;
  grid-auto-rows: 1fr;
  height: 200px;
  margin: 2px 0 0;
  padding: 0;
  list-style: none;
}

.node {
  display: flex;
  align-items: center;
}

.node--level0 {
  padding-left: 10px;
}

.node--level1 {
  padding-left: 19px;
}

.node--level2 {
  padding-left: 40px;
}

.node__arrow {
  width: 12px;
}

.node__arrow svg {
  width: 8px;
  height: 8px;
}

.node__body {
  display: flex;
  align-items: center;
  height: 10px;
  padding-right: 3px;
  background: #f1f1f1;
  white-space: nowrap;
}

.node__eye {
  width: 10px;
  height: 10px;
}

.node__chip {
  display: flex;
  align-items: center;
  gap: 6px;
  height: 10px;
  margin-left: 3px;
}

.node--level1 .node__chip {
  gap: 5px;
  margin-left: 1px;
}

.node--level1 .node__eye {
  margin-right: 2px;
}

.node__icon {
  width: 10px;
  height: 10px;
}

.node__chip--dashed {
  border-bottom: 1px dashed #4a6fb5;
}

.node__body--selected {
  padding-right: 0;
}

.node__body--selected .node__chip {
  margin-left: 2px;
  padding: 0 5px 0 1px;
  background: #0a93d3;
  color: #fff;
  font-weight: 700;
}

.node__body--root .node__chip {
  margin-left: 2px;
  padding: 0 4px 0 1px;
  background: #8a8a8a;
  color: #fff;
  font-weight: 700;
}

.node__badge {
  width: 10px;
  height: 10px;
  margin-left: 1px;
}

.viewcube {
  position: absolute;
  top: 7px;
  right: 8px;
  width: 54px;
  height: 56px;
}

.viewcube__face {
  fill: #888;
  font-size: 13px;
}

.viewcube__z {
  fill: #7a7af0;
  font-size: 7px;
}

.viewcube__x {
  fill: #e06a6a;
  font-size: 7px;
}

/* value box floating on the model */
.hud {
  position: absolute;
  top: 258px;
  left: calc(41% - 2px);
  display: flex;
  align-items: center;
  height: 11px;
  padding: 1px;
  background: #f1f1f1;
}

.hud__grip {
  width: 4px;
  height: 9px;
  border-right: 1px dotted #aaa;
}

.hud__field {
  display: flex;
  align-items: center;
  justify-content: center;
  width: 37px;
  height: 9px;
  margin-left: 2px;
  border: 1px solid #ccc;
  background: #fff;
}

.hud__input {
  width: 24px;
  height: 7px;
  background: #0f7bd0;
  color: #fff;
  text-align: center;
}

.hud__more {
  width: 11px;
  font-size: 8px;
}

/* offset dialog */
.dialog {
  position: absolute;
  top: 66px;
  right: 2px;
  width: 130px;
  border: 1px solid #dadada;
  background: #f1f1f1;
}

.dialog__head {
  display: flex;
  align-items: center;
  gap: 3px;
  height: 11px;
  padding: 0 2px 0 4px;
  border-bottom: 1px solid #fff;
}

.dialog__fold {
  margin-left: auto;
}

.dialog__rows {
  display: grid;
  grid-auto-rows: 1fr;
  height: 79px;
  padding-left: 6px;
}

.row {
  display: flex;
  align-items: center;
}

.row__label {
  width: 48px;
  font-size: 5px;
  white-space: nowrap;
}

.pick {
  display: flex;
  align-items: center;
  gap: 1px;
  height: 14px;
  padding: 0 2px 0 1px;
  background: #0a93d3;
  color: #fff;
  font-weight: 700;
  white-space: nowrap;
}

.pick svg {
  width: 8px;
  height: 10px;
}

.row__clear {
  margin-left: 4px;
}

.row__clear svg {
  width: 6px;
  height: 6px;
}

.check {
  display: grid;
  place-items: center;
  width: 7px;
  height: 7px;
  margin-left: 3px;
  border: 1px solid #555;
  background: #fff;
  appearance: none;
}

.check:checked::after {
  content: '';
  width: 4px;
  height: 2px;
  border: solid #222;
  border-width: 0 0 1px 1px;
  transform: rotate(-45deg);
}

.kind {
  display: grid;
  place-items: center;
  width: 12px;
  height: 14px;
  margin-right: 3px;
}

.kind--active {
  background: #0a93d3;
}

.kind svg {
  width: 10px;
  height: 10px;
}

.field {
  width: 58px;
  height: 13px;
  padding: 0 2px;
  border: 1px solid #ddd;
  background: #fff;
}

.field--select {
  display: flex;
  align-items: center;
  gap: 2px;
}

.field--select svg {
  width: 8px;
  height: 8px;
}

.field--select select {
  flex: 1;
  min-width: 0;
  appearance: none;
}

.dialog__foot {
  display: flex;
  align-items: center;
  gap: 5px;
  height: 18px;
  padding: 0 5px 0 3px;
  border-top: 1px solid #ddd;
}

.dialog__info {
  width: 8px;
  height: 8px;
  margin-right: auto;
}

.btn {
  width: 32px;
  height: 11px;
  border: 1px solid #b9b9b9;
  background: #e9e9e9;
  color: #666;
  white-space: nowrap;
}

/* navigation bar */
.navbar {
  position: absolute;
  bottom: 3px;
  left: 50%;
  display: flex;
  align-items: center;
  justify-content: space-between;
  width: 208px;
  height: 13px;
  padding: 0 3px 0 1px;
  background: #f3f3f3;
  transform: translateX(-50%);
}

.navbar__btn {
  display: flex;
  align-items: center;
  gap: 1px;
}

.navbar__btn--first {
  padding-left: 3px;
  border-left: 1px solid #ccc;
}

/* timeline */
.timeline {
  display: flex;
  align-items: flex-start;
  height: 26px;
  border-top: 1px solid #dcdcdc;
  background: #f1f1f1;
}

.timeline__play {
  display: flex;
  gap: 5px;
  width: 74px;
  padding: 8px 0 0 4px;
}

.timeline__play svg {
  width: 8px;
  height: 8px;
}

.timeline__track {
  position: relative;
  display: grid;
  grid-template-columns: repeat(13, 1fr);
  width: 162px;
  padding-top: 7px;
}

.feature {
  display: grid;
  justify-items: center;
}

/* connector line with a tick below every feature */
.feature::after {
  content: '';
  width: 100%;
  height: 3px;
  border-bottom: 1px solid #b5b5b5;
  background: linear-gradient(#b5b5b5, #b5b5b5) center / 1px 100% no-repeat;
}

.feature:first-child::after {
  width: 50%;
  margin-left: 50%;
  background-position: left;
}

.timeline__marker {
  position: absolute;
  top: 4px;
  right: -4px;
  width: 8px;
  height: 18px;
}

.timeline__settings {
  margin: 7px 6px 0 auto;
}
</style>
